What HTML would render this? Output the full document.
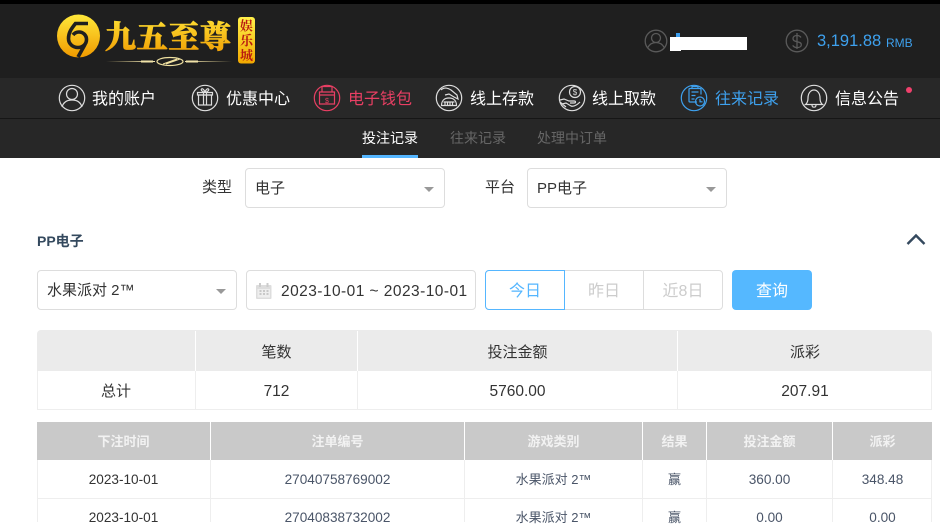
<!DOCTYPE html>
<html><head><meta charset="utf-8">
<style>
html,body{margin:0;padding:0;background:#fff}
body{width:940px;height:522px;overflow:hidden;position:relative;font-family:"Liberation Sans","Noto Sans CJK SC",sans-serif;color:#333}
.a{position:absolute;white-space:nowrap}
.nav{font-size:16px;line-height:20px;top:90px;color:#fff}
.sub{font-size:14px;line-height:20px;top:128px;color:#666}
.box{position:absolute;box-sizing:border-box;border:1px solid #ddd;border-radius:4px;background:#fff;height:40px}
.arrow{position:absolute;width:0;height:0;border-left:5px solid transparent;border-right:5px solid transparent;border-top:5px solid #999}
.t{position:absolute;text-align:center;white-space:nowrap;font-size:15px;line-height:20px}
.h{font-size:13px;font-weight:700;color:#f2f2f2;top:432px}
.r{font-size:13.600px;color:#4a5568}
.c{font-size:13px;color:#4a5568}
.l{position:absolute;background:#eee}
svg{position:absolute;overflow:visible}
</style></head><body>
<div class="a" style="left:0;top:0;width:940px;height:4px;background:#000"></div>
<div class="a" style="left:0;top:4px;width:940px;height:74px;background:#1f1f1f"></div>
<div class="a" style="left:0;top:78px;width:940px;height:40px;background:#282828"></div>
<div class="a" style="left:0;top:118px;width:940px;height:1px;background:#161616"></div>
<div class="a" style="left:0;top:119px;width:940px;height:39px;background:#272727"></div>

<svg style="left:0;top:0" width="300" height="78">
<defs>
<linearGradient id="g" x1="0" y1="0" x2="0" y2="1"><stop offset="0" stop-color="#ffe83a"/><stop offset="1" stop-color="#f09a00"/></linearGradient>
<linearGradient id="g2" x1="0" y1="0" x2="0" y2="1"><stop offset="0" stop-color="#fff04a"/><stop offset="1" stop-color="#f2a900"/></linearGradient>
<linearGradient id="ln" x1="0" y1="0" x2="1" y2="0"><stop offset="0" stop-color="#e6d28e" stop-opacity="0"/><stop offset=".35" stop-color="#f4e7b0"/><stop offset=".65" stop-color="#f4e7b0"/><stop offset="1" stop-color="#e6d28e" stop-opacity="0"/></linearGradient>
</defs>
<circle cx="78.500" cy="36" r="21.500" fill="url(#g)"/>
<path d="M88 23.500H75.500C72 28 68.500 32 68.500 38.500C68.500 44 73 47.500 78 47.500C83 47.500 86.500 44 86.500 39.500C86.500 35 83 32 79 32C76.500 32 74.500 33 73 35" fill="none" stroke="#1f1f1f" stroke-width="3.600"/>
<path d="M85 44.500L78 57" stroke="#1f1f1f" stroke-width="3.600" fill="none"/>
<text x="105" y="48" font-family="'Noto Serif CJK SC',serif" font-weight="900" font-size="31" fill="url(#g)" stroke="url(#g)" stroke-width=".8" textLength="126" lengthAdjust="spacing">九五至尊</text>
<rect x="106" y="61" width="126" height="1" fill="url(#ln)"/>
<path d="M141 61.500h12M186 61.500h12" stroke="#f1e3a8" stroke-width="2"/>
<rect x="155" y="56.500" width="30" height="9" fill="#1f1f1f"/>
<ellipse cx="170" cy="61.500" rx="13" ry="4" fill="none" stroke="#efe0a0" stroke-width="1.200"/>
<path d="M163 64L177 59M166 64L180 59" stroke="#efe0a0" stroke-width="1"/>
<rect x="238" y="17" width="17" height="46.500" rx="3" fill="url(#g2)"/>
<text x="246.500" y="30.500" text-anchor="middle" font-family="'Noto Serif CJK SC',serif" font-weight="700" font-size="13" fill="#b81b10">娱</text>
<text x="246.500" y="45" text-anchor="middle" font-family="'Noto Serif CJK SC',serif" font-weight="700" font-size="13" fill="#b81b10">乐</text>
<text x="246.500" y="60" text-anchor="middle" font-family="'Noto Serif CJK SC',serif" font-weight="700" font-size="13" fill="#b81b10">城</text>
</svg>

<!-- user / balance -->
<svg style="left:640px;top:25px" width="40" height="32" fill="none" stroke="#5a5a5a" stroke-width="1.300">
<circle cx="16" cy="16" r="10.800"/><circle cx="16" cy="13" r="4.500"/><path d="M7.500 23c2-4 5-5.500 8.500-5.500s6.500 1.500 8.500 5.500"/>
</svg>
<div class="a" style="left:676px;top:33px;width:4px;height:8px;background:#3c9eee"></div>
<div class="a" style="left:670px;top:37px;width:77px;height:13px;background:#fff"></div>
<div class="a" style="left:670px;top:45px;width:11px;height:6px;background:#fff"></div>
<svg style="left:781px;top:25px" width="32" height="32" fill="none" stroke="#5a5a5a" stroke-width="1.300">
<circle cx="16" cy="16" r="10.800"/>
<path d="M20 12.500c-1-1.500-2.500-2-4-2-2.200 0-4 1-4 3 0 4.500 8.300 2 8.300 6.200 0 1.800-1.900 2.900-4.300 2.900-1.700 0-3.300-.7-4.300-2.200M16 8v16"/>
</svg>
<div class="a" style="left:817px;top:31px;font-size:16.500px;line-height:20px;color:#3ea1ee">3,191.88</div>
<div class="a" style="left:886px;top:35px;font-size:12px;line-height:16px;color:#3ea1ee">RMB</div>

<!-- nav icons -->
<svg style="left:0;top:80px" width="940" height="36" fill="none" stroke="#ddd" stroke-width="1.200">
<g><circle cx="72" cy="18" r="12.700"/><circle cx="72" cy="14" r="5.500"/><path d="M62 27c1.500-5 5-7 10-7s8.500 2 10 7"/></g>
<g><circle cx="205" cy="18" r="12.700"/><rect x="198.500" y="15" width="13" height="10"/><path d="M197.500 12.500h15v2.500h-15zM203.500 12.500v12.500M206.500 12.500v12.500M205 12.500c-3-1-4.500-2.500-3.500-3.500s3 1 3.500 3.500c.5-2.500 2.500-4.500 3.500-3.500s-.5 2.500-3.500 3.500"/></g>
<g stroke="#e83f63"><circle cx="327" cy="18" r="12.700"/><path d="M322 12V6.500h10v5.500M319.500 12h15v12h-15zM319.500 15h15"/><text x="327" y="23" text-anchor="middle" font-size="7" fill="#e83f63" stroke="none">$</text></g>
<g><circle cx="449" cy="18" r="12.700"/><path d="M441 10c3-3 7-2 10 0l6 5 1 4-4-2-5-3-4 1"/><path d="M441.500 25.500c0-5 3-7.500 7.500-7.500s7.500 2.500 7.500 7.500z"/><path d="M445 22v3M447.500 22v3M450 22v3M452.500 22v3M443.500 22h11"/></g>
<g><circle cx="572" cy="18" r="12.700"/><circle cx="575" cy="12" r="5.500"/><text x="575" y="15" text-anchor="middle" font-size="8" fill="#ddd" stroke="none">$</text><path d="M560 20l4-1 5 2h5c2 0 2 2 0 2h-4M562 24l4-1 5 3c3 1 6-1 9-4M560 22l6 5"/></g>
<g stroke="#3ea1ee"><circle cx="694" cy="18" r="12.700"/><path d="M697 22h-7a1 1 0 0 1-1-1V9.500a1 1 0 0 1 1-1h10a1 1 0 0 1 1 1v5M692 8V6.500h6V8M691.500 12h7M691.500 15.500h4M691.500 19h3"/><circle cx="700" cy="21.500" r="4.500"/><path d="M700 19v2.800h2.500"/></g>
<g><circle cx="814" cy="18" r="12.700"/><path d="M805.500 24.500c2-1.500 2.500-3.500 2.500-6.500 0-4.500 2.500-8 6-8s6 3.500 6 8c0 3 .5 5 2.500 6.500zM812 25c0 1.500 1 2.200 2 2.200s2-.7 2-2.200"/></g>
</svg>
<div class="a nav" style="left:92px">我的账户</div>
<div class="a nav" style="left:226px">优惠中心</div>
<div class="a nav" style="left:348px;color:#e83f63">电子钱包</div>
<div class="a nav" style="left:470px">线上存款</div>
<div class="a nav" style="left:592px">线上取款</div>
<div class="a nav" style="left:715px;color:#3ea1ee">往来记录</div>
<div class="a nav" style="left:835px">信息公告</div>
<div class="a" style="left:906px;top:87px;width:6px;height:6px;border-radius:50%;background:#f0406c"></div>

<div class="a sub" style="left:362px;color:#fff">投注记录</div>
<div class="a" style="left:362px;top:155px;width:56px;height:3px;background:#55b6ff"></div>
<div class="a sub" style="left:450px">往来记录</div>
<div class="a sub" style="left:537px">处理中订单</div>

<!-- filters -->
<div class="a" style="left:202px;top:178px;font-size:15px;line-height:20px">类型</div>
<div class="box" style="left:245px;top:168px;width:200px"></div>
<div class="a" style="left:255px;top:179px;font-size:15px;line-height:20px">电子</div>
<div class="arrow" style="left:424px;top:187px"></div>
<div class="a" style="left:485px;top:178px;font-size:15px;line-height:20px">平台</div>
<div class="box" style="left:527px;top:168px;width:200px"></div>
<div class="a" style="left:537px;top:179px;font-size:15px;line-height:20px">PP电子</div>
<div class="arrow" style="left:706px;top:187px"></div>

<div class="a" style="left:37px;top:231px;font-size:14px;line-height:20px;font-weight:700;color:#34495e">PP电子</div>
<svg style="left:905px;top:232px" width="22" height="14" fill="none" stroke="#34495e" stroke-width="2.400"><path d="M2.500 12L11 3.500 19.500 12"/></svg>

<div class="box" style="left:37px;top:270px;width:200px"></div>
<div class="a" style="left:47px;top:281px;font-size:15px;line-height:20px">水果派对 2™</div>
<div class="arrow" style="left:216px;top:289px"></div>
<div class="box" style="left:246px;top:270px;width:230px"></div>
<svg style="left:255px;top:282px" width="18" height="18"><rect x="1" y="3" width="15.500" height="14" rx="1" fill="#ddd"/><rect x="2.500" y="7" width="12.500" height="8.500" fill="#eee"/><rect x="4" y="1" width="2" height="4" fill="#ccc"/><rect x="11.500" y="1" width="2" height="4" fill="#ccc"/><path d="M4.500 9h2M8 9h2M11.500 9h2M4.500 12h2M8 12h2M11.500 12h2" stroke="#bbb" stroke-width="1.500"/></svg>
<div class="a" style="left:281px;top:282px;font-size:15.500px;line-height:20px;letter-spacing:.45px">2023-10-01 ~ 2023-10-01</div>

<div class="box" style="left:485px;top:270px;width:238px"></div>
<div class="a" style="left:643px;top:270px;width:1px;height:40px;background:#ddd"></div>
<div class="box" style="left:485px;top:270px;width:80px;border-color:#55b6ff;border-radius:4px 0 0 4px"></div>
<div class="t" style="left:485px;top:282px;width:80px;font-size:16px;color:#55b6ff">今日</div>
<div class="t" style="left:565px;top:282px;width:78px;font-size:16px;color:#ccc">昨日</div>
<div class="t" style="left:643px;top:282px;width:80px;font-size:16px;color:#ccc">近8日</div>
<div class="t" style="left:732px;top:270px;width:80px;height:40px;line-height:43px;font-size:16px;color:#fff;background:#55b8ff;border-radius:4px">查询</div>

<!-- summary -->
<div class="a" style="left:37px;top:330px;width:895px;height:41px;background:#ebebeb;border-radius:4px 4px 0 0"></div>
<div class="l" style="left:37px;top:371px;width:1px;height:39px"></div>
<div class="l" style="left:931px;top:371px;width:1px;height:39px"></div>
<div class="l" style="left:37px;top:409px;width:895px;height:1px"></div>
<div class="l" style="left:195px;top:371px;width:1px;height:39px"></div>
<div class="l" style="left:357px;top:371px;width:1px;height:39px"></div>
<div class="l" style="left:677px;top:371px;width:1px;height:39px"></div>
<div class="l" style="left:195px;top:331px;width:1px;height:40px;background:#fff"></div>
<div class="l" style="left:357px;top:331px;width:1px;height:40px;background:#fff"></div>
<div class="l" style="left:677px;top:331px;width:1px;height:40px;background:#fff"></div>
<div class="t" style="left:196px;top:343px;width:161px">笔数</div>
<div class="t" style="left:358px;top:343px;width:319px">投注金额</div>
<div class="t" style="left:678px;top:343px;width:254px">派彩</div>
<div class="t" style="left:37px;top:382px;width:158px">总计</div>
<div class="t" style="left:196px;top:382px;width:161px;font-size:15.500px">712</div>
<div class="t" style="left:358px;top:382px;width:319px;font-size:15.500px">5760.00</div>
<div class="t" style="left:678px;top:382px;width:254px;font-size:15.500px">207.91</div>

<!-- detail table -->
<div class="a" style="left:37px;top:422px;width:895px;height:38px;background:#c9c9c9"></div>
<div class="l" style="left:37px;top:460px;width:1px;height:62px"></div>
<div class="l" style="left:931px;top:460px;width:1px;height:62px"></div>
<div class="l" style="left:37px;top:498px;width:895px;height:1px"></div>
<div class="l" style="left:210px;top:460px;width:1px;height:62px"></div>
<div class="l" style="left:464px;top:460px;width:1px;height:62px"></div>
<div class="l" style="left:642px;top:460px;width:1px;height:62px"></div>
<div class="l" style="left:706px;top:460px;width:1px;height:62px"></div>
<div class="l" style="left:832px;top:460px;width:1px;height:62px"></div>
<div class="l" style="left:210px;top:422px;width:1px;height:38px;background:#fff"></div>
<div class="l" style="left:464px;top:422px;width:1px;height:38px;background:#fff"></div>
<div class="l" style="left:642px;top:422px;width:1px;height:38px;background:#fff"></div>
<div class="l" style="left:706px;top:422px;width:1px;height:38px;background:#fff"></div>
<div class="l" style="left:832px;top:422px;width:1px;height:38px;background:#fff"></div>
<div class="t h" style="left:37px;width:173px">下注时间</div>
<div class="t h" style="left:211px;width:253px">注单编号</div>
<div class="t h" style="left:465px;width:177px">游戏类别</div>
<div class="t h" style="left:643px;width:63px">结果</div>
<div class="t h" style="left:707px;width:125px">投注金额</div>
<div class="t h" style="left:833px;width:99px">派彩</div>

<div class="t" style="left:37px;top:470px;width:173px;font-size:13.600px">2023-10-01</div>
<div class="t r" style="left:211px;top:470px;width:253px">27040758769002</div>
<div class="t c" style="left:465px;top:470px;width:177px">水果派对 2™</div>
<div class="t c" style="left:643px;top:470px;width:63px">赢</div>
<div class="t r" style="left:707px;top:470px;width:125px">360.00</div>
<div class="t r" style="left:833px;top:470px;width:99px">348.48</div>

<div class="t" style="left:37px;top:508px;width:173px;font-size:13.600px">2023-10-01</div>
<div class="t r" style="left:211px;top:508px;width:253px">27040838732002</div>
<div class="t c" style="left:465px;top:508px;width:177px">水果派对 2™</div>
<div class="t c" style="left:643px;top:508px;width:63px">赢</div>
<div class="t r" style="left:707px;top:508px;width:125px">0.00</div>
<div class="t r" style="left:833px;top:508px;width:99px">0.00</div>
</body></html>
